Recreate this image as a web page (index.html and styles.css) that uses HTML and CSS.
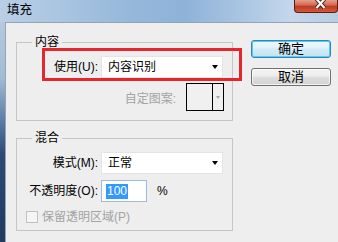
FILE: index.html
```html
<!DOCTYPE html>
<html lang="zh-CN">
<head>
<meta charset="utf-8">
<title>填充</title>
<link rel="stylesheet" href="styles.css">
</head>
<body>
<div class="window">
  <header class="titlebar">
    <span class="title">填充</span>
    <button class="close" aria-label="关闭">
      <svg width="11" height="9" viewBox="0 0 11 9"><path d="M1.5 -1 L9.5 8 M9.5 -1 L1.5 8" stroke="#4a140c" stroke-width="4" fill="none"/><path d="M1.5 -1 L9.5 8 M9.5 -1 L1.5 8" stroke="#ffffff" stroke-width="2.2" fill="none"/></svg>
    </button>
  </header>
  <div class="frame">
    <div class="frame-edge"></div>
    <main class="client">
      <div class="groups">
        <fieldset class="group">
          <legend>内容</legend>
          <div class="group-body">
            <div class="form-row">
              <span class="lbl">使用(U):</span>
              <div class="select"><span>内容识别</span><i class="arrow"></i></div>
              <div class="highlight"></div>
            </div>
            <div class="pattern-row">
              <span class="lbl-disabled">自定图案:</span>
              <div class="swatch"><span class="swatch-fill"></span><span class="swatch-btn"><i class="arrow arrow-small"></i></span></div>
            </div>
          </div>
        </fieldset>
        <fieldset class="group group-blend">
          <legend>混合</legend>
          <div class="group-body">
            <div class="form-row">
              <span class="lbl">模式(M):</span>
              <div class="select"><span>正常</span><i class="arrow"></i></div>
            </div>
            <div class="form-row row-gap">
              <span class="lbl">不透明度(O):</span>
              <div class="opacity">
                <div class="input"><span class="sel">100</span></div>
                <span class="pct">%</span>
              </div>
            </div>
            <div class="check-row">
              <span class="checkbox"></span>
              <span class="lbl-disabled">保留透明区域(P)</span>
            </div>
          </div>
        </fieldset>
      </div>
      <div class="buttons">
        <button class="btn btn-default">确定</button>
        <button class="btn">取消</button>
      </div>
    </main>
  </div>
</div>
</body>
</html>
```

FILE: styles.css
```css
* { box-sizing: border-box; }
html, body { margin: 0; padding: 0; }
body {
  width: 338px;
  height: 242px;
  overflow: hidden;
  font: 12px/14px "Liberation Sans", "Noto Sans CJK SC", sans-serif;
  color: #000;
  background: #eeeeee;
}
.window { display: flex; flex-direction: column; height: 242px; }
.titlebar {
  height: 22px;
  flex: none;
  display: flex;
  justify-content: space-between;
  align-items: flex-start;
  background: linear-gradient(90deg, #b9cfe5 0%, #a9c5e1 18%, #94b7da 40%, #8fb3d8 55%, #aac6e2 72%, #c4d7eb 86%, #b8cde3 100%);
}
.title {
  font-size: 12.5px;
  line-height: 16px;
  padding: 2px 0 0 7px;
  color: #000;
}
.close {
  width: 44px;
  height: 13px;
  margin: 0;
  padding: 0 0 0 20px;
  border: 1px solid #5e1b12;
  border-top: none;
  border-radius: 0 0 4px 4px;
  background: linear-gradient(#e2a090 0%, #d66a52 40%, #c13a22 55%, #cf5a3d 100%);
  display: flex;
  align-items: flex-start;
}
.frame { flex: 1; display: flex; min-height: 0; }
.frame-edge {
  width: 5px;
  flex: none;
  background: linear-gradient(#b4c9df 0%, #a3bcd6 25%, #5a7ca6 45%, #2c4a74 60%, #213b61 100%);
}
.client {
  flex: 1;
  background: #eeeeee;
  border-top: 1px solid #95a3b3;
  border-left: 1px solid #95a3b3;
  display: flex;
  align-items: flex-start;
  padding: 12px 0 0 10px;
  gap: 18px;
}
.groups { display: flex; flex-direction: column; gap: 10px; }
.group {
  margin: 0;
  padding: 0;
  width: 217px;
  min-width: 0;
  border: 1px solid #c6c6c6;
}
.group legend {
  margin-left: 15px;
  padding: 0 3px;
  line-height: 14px;
  height: 14px;
}
.group-body { padding: 7px 8px 9px 7px; }
.group-blend .group-body { padding-bottom: 7px; }
.form-row {
  position: relative;
  display: grid;
  grid-template-columns: 74px 122px;
  column-gap: 3px;
  align-items: center;
  height: 22px;
}
.row-gap { margin-top: 6px; }
.lbl { text-align: right; white-space: nowrap; }
.lbl-disabled { color: #a3a3a3; white-space: nowrap; }
.select {
  height: 22px;
  background: #ffffff;
  border: 1px solid #e4e4e4;
  display: flex;
  align-items: center;
  justify-content: space-between;
  padding: 0 4px 0 6px;
}
.arrow {
  width: 0; height: 0;
  border-left: 3.5px solid transparent;
  border-right: 3.5px solid transparent;
  border-top: 4px solid #000;
}
.arrow-small {
  border-left-width: 2.5px;
  border-right-width: 2.5px;
  border-top: 3px solid #a8a8a8;
}
.highlight {
  position: absolute;
  left: 18px;
  top: -8px;
  width: 200px;
  height: 33px;
  border: 3px solid #e5262e;
  pointer-events: none;
}
.pattern-row {
  margin-top: 5px;
  display: flex;
  justify-content: flex-end;
  align-items: center;
  gap: 10px;
}
.pattern-row .lbl-disabled { margin-top: 3px; }
.swatch {
  width: 38px;
  height: 28px;
  border: 1px solid #000;
  display: flex;
  background: #f0f0f0;
}
.swatch-fill { width: 26px; border-right: 1px solid #000; }
.swatch-btn { flex: 1; display: flex; align-items: center; justify-content: center; }
.opacity { display: flex; align-items: center; gap: 10px; }
.input {
  width: 46px;
  height: 22px;
  background: #fff;
  border: 1px solid #9bbbe0;
  display: flex;
  align-items: center;
  padding-left: 4px;
}
.sel { background: #3399ff; color: #fff; line-height: 15px; padding: 0 1px; }
.check-row {
  margin-top: 8px;
  display: flex;
  align-items: center;
  gap: 4px;
  padding-left: 2px;
  height: 13px;
}
.checkbox {
  width: 12px;
  height: 12px;
  border: 1px solid #c2c2c2;
  background: #f5f5f5;
}
.buttons { display: flex; flex-direction: column; gap: 10px; margin-top: 5px; }
.btn {
  width: 80px;
  height: 18px;
  margin: 0;
  padding: 0;
  font: 13px/14px "Liberation Sans", "Noto Sans CJK SC", sans-serif;
  color: #000;
  border: 1px solid #707070;
  border-radius: 3px;
  background: linear-gradient(#f4f4f4 0%, #ececec 45%, #dedede 50%, #d2d2d2 100%);
  box-shadow: inset 0 0 0 1px rgba(255,255,255,0.7);
}
.btn-default {
  border-color: #3c7fb1;
  background: linear-gradient(#eef7fc 0%, #e0f1fb 45%, #d0ebf8 50%, #c4e3f3 100%);
  box-shadow: inset 0 0 0 1px #48d3f5;
}
```
